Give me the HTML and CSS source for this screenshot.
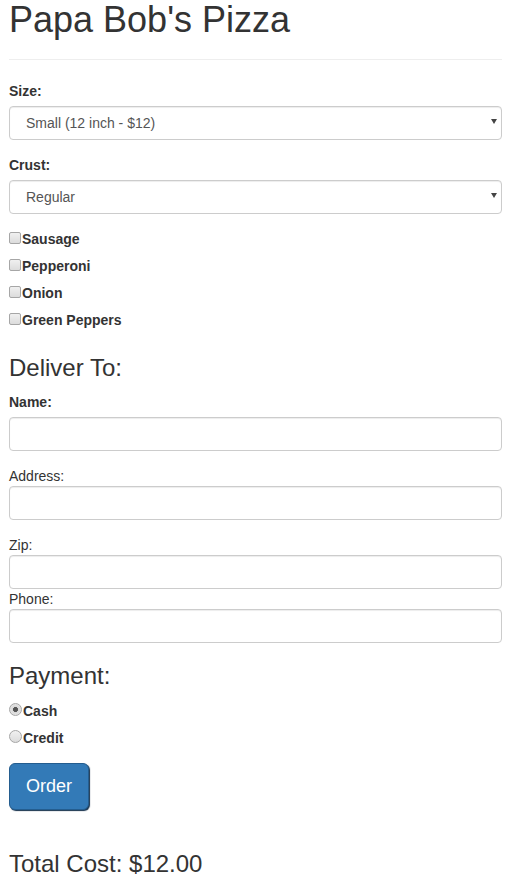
FILE: index.html
```html
<!DOCTYPE html>
<html lang="en">
<head>
<meta charset="utf-8">
<title>Papa Bob's Pizza</title>
<link rel="stylesheet" href="styles.css">
</head>
<body>
<div class="page">
  <header class="page-header">
    <h1>Papa Bob's Pizza</h1>
  </header>

  <div class="form-group">
    <label class="label-bold" for="size">Size:</label>
    <div class="select-wrap">
      <select id="size" class="form-control">
        <option>Small (12 inch - $12)</option>
        <option>Medium (14 inch - $14)</option>
        <option>Large (16 inch - $16)</option>
      </select>
    </div>
  </div>

  <div class="form-group">
    <label class="label-bold" for="crust">Crust:</label>
    <div class="select-wrap">
      <select id="crust" class="form-control">
        <option>Regular</option>
        <option>Thin</option>
        <option>Thick</option>
      </select>
    </div>
  </div>

  <div class="choices toppings">
    <label class="choice"><input type="checkbox" class="check">Sausage</label>
    <label class="choice"><input type="checkbox" class="check">Pepperoni</label>
    <label class="choice"><input type="checkbox" class="check">Onion</label>
    <label class="choice"><input type="checkbox" class="check">Green Peppers</label>
  </div>

  <h3 class="section-title">Deliver To:</h3>

  <div class="form-group">
    <label class="label-bold" for="name">Name:</label>
    <input id="name" type="text" class="form-control">
  </div>

  <div class="form-group">
    <label class="label-plain" for="address">Address:</label>
    <input id="address" type="text" class="form-control">
  </div>

  <div class="field">
    <label class="label-plain" for="zip">Zip:</label>
    <input id="zip" type="text" class="form-control">
  </div>

  <div class="field">
    <label class="label-plain" for="phone">Phone:</label>
    <input id="phone" type="text" class="form-control">
  </div>

  <h3 class="section-title payment-title">Payment:</h3>

  <div class="choices">
    <label class="choice"><input type="radio" name="pay" class="radio" checked>Cash</label>
    <label class="choice"><input type="radio" name="pay" class="radio">Credit</label>
  </div>

  <div class="actions">
    <button type="button" class="btn-order">Order</button>
  </div>

  <h3 class="section-title total">Total Cost: $12.00</h3>
</div>
</body>
</html>
```

FILE: styles.css
```css
html, body {
  margin: 0;
  padding: 0;
  background: #fff;
}

body {
  font-family: "Liberation Sans", Arial, Helvetica, sans-serif;
  font-size: 14px;
  line-height: 20px;
  color: #333;
}

.page {
  padding: 0 11px 0 9px;
}

.page-header {
  padding-bottom: 19px;
  border-bottom: 1px solid #eee;
  margin-bottom: 21px;
}

.page-header h1 {
  margin: 0;
  font-size: 36px;
  line-height: 40px;
  font-weight: 400;
  color: #333;
}

.form-group {
  margin-bottom: 15px;
}

.label-bold {
  display: block;
  font-weight: 700;
  margin-bottom: 5px;
  line-height: 20px;
}

.label-plain {
  display: block;
  font-weight: 400;
  line-height: 20px;
}

.form-control {
  display: block;
  box-sizing: border-box;
  width: 100%;
  height: 34px;
  margin: 0;
  padding: 6px 12px;
  font-family: inherit;
  font-size: 14px;
  line-height: 20px;
  color: #555;
  background: #fff;
  border: 1px solid #ccc;
  border-radius: 4px;
  box-shadow: inset 0 1px 1px rgba(0, 0, 0, 0.075);
  outline: none;
}

.select-wrap {
  position: relative;
}

.select-wrap select.form-control {
  -webkit-appearance: none;
  appearance: none;
  padding-left: 16px;
  padding-right: 24px;
}

.select-wrap::after {
  content: "";
  position: absolute;
  right: 5px;
  top: 13px;
  width: 0;
  height: 0;
  border-left: 3.5px solid transparent;
  border-right: 3.5px solid transparent;
  border-top: 5px solid #444;
  pointer-events: none;
}

.choices {
  display: flex;
  flex-direction: column;
  gap: 7px;
}

.toppings {
  margin-top: 2px;
}

.choice {
  display: block;
  height: 20px;
  line-height: 20px;
  font-weight: 700;
  white-space: nowrap;
}

.check,
.radio {
  -webkit-appearance: none;
  appearance: none;
  display: inline-block;
  box-sizing: border-box;
  width: 12px;
  height: 12px;
  margin: 0 1px 0 0;
  vertical-align: baseline;
  border: 1px solid #a6a6a6;
  background: linear-gradient(#f0f0f0, #dcdcdc);
}

.check {
  border-radius: 2px;
}

.radio {
  border-radius: 50%;
  width: 13px;
  height: 13px;
}

.radio:checked {
  background: radial-gradient(circle, #555 0, #555 2.2px, #d9d9d9 2.8px, #ececec 100%);
}

.section-title {
  margin: 25px 0 11px;
  font-size: 24px;
  line-height: 26px;
  font-weight: 400;
  color: #333;
}

.payment-title {
  margin-top: 20px;
  margin-bottom: 12px;
}

.actions {
  margin-top: 15px;
}

.btn-order {
  display: inline-block;
  padding: 10px 16px;
  font-family: inherit;
  font-size: 18px;
  line-height: 25px;
  color: #fff;
  background: #337ab7;
  border: 1px solid #245d8f;
  border-radius: 6px;
  box-shadow: 1px 1px 1px #14304b;
  cursor: pointer;
}

.total {
  margin-top: 41px;
  margin-bottom: 0;
}
```
